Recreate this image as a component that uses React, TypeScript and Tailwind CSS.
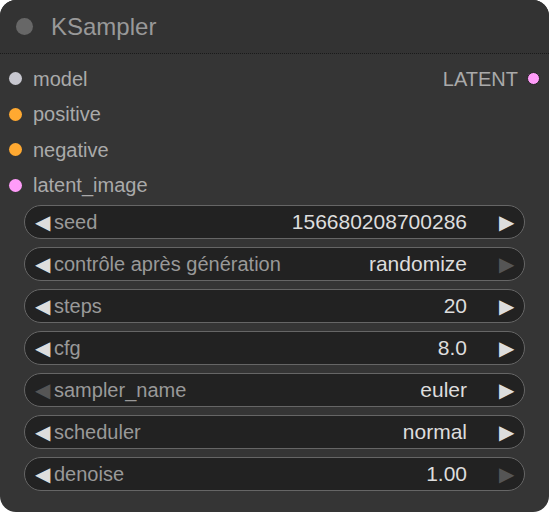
export default function App() {
  const rows: [string, string, boolean, boolean][] = [
    ["seed", "156680208700286", true, true],
    ["contrôle après génération", "randomize", true, false],
    ["steps", "20", true, true],
    ["cfg", "8.0", true, true],
    ["sampler_name", "euler", false, true],
    ["scheduler", "normal", true, true],
    ["denoise", "1.00", true, false],
  ];
  const inputs: [string, string][] = [
    ["model", "#c8c8d0"],
    ["positive", "#ffa931"],
    ["negative", "#ffa931"],
    ["latent_image", "#ff9cf9"],
  ];
  return (
    <div className="w-[549px] h-[512px] bg-white" style={{ fontFamily: '"Liberation Sans", Arial, sans-serif' }}>
      <div className="w-[549px] h-[512px] bg-[#353535] rounded-[16px] overflow-hidden flex flex-col">
        <div className="h-[54px] bg-[#333333] border-b border-dotted border-[#1a1a1a] flex items-center pl-[16px]">
          <div className="w-[17px] h-[17px] rounded-full bg-[#676767]" />
          <span className="ml-[18px] text-[24px] text-[#999999]">KSampler</span>
        </div>
        <div className="relative pt-[7px]">
          {inputs.map(([n, c]) => (
            <div key={n} className="h-[35.5px] flex items-center pl-[9px]">
              <div className="w-[13px] h-[13px] rounded-full" style={{ background: c }} />
              <span className="ml-[11px] text-[20px] text-[#aaaaaa]">{n}</span>
            </div>
          ))}
          <div className="absolute right-[9px] top-[7px] h-[35px] flex items-center">
            <span className="text-[20px] text-[#aaaaaa] mr-[9px]">LATENT</span>
            <div className="w-[13px] h-[13px] rounded-full bg-[#ff9cf9] border border-[#222]" />
          </div>
        </div>
        <div className="flex flex-col gap-[8px] px-[24px] mt-[2px]">
          {rows.map(([l, v, la, ra]) => (
            <div key={l} className="h-[34px] rounded-full bg-[#222222] border border-[#666666] flex items-center pl-[10px] pr-[10px]">
              <span className={`text-[20px] leading-none ${la ? "text-[#dddddd]" : "text-[#555555]"}`}>◀</span>
              <span className="ml-[4px] text-[20px] text-[#999999]">{l}</span>
              <span className="ml-auto text-[21px] text-[#dddddd]">{v}</span>
              <span className={`ml-[32px] text-[20px] leading-none ${ra ? "text-[#dddddd]" : "text-[#555555]"}`}>▶</span>
            </div>
          ))}
        </div>
      </div>
    </div>
  );
}
